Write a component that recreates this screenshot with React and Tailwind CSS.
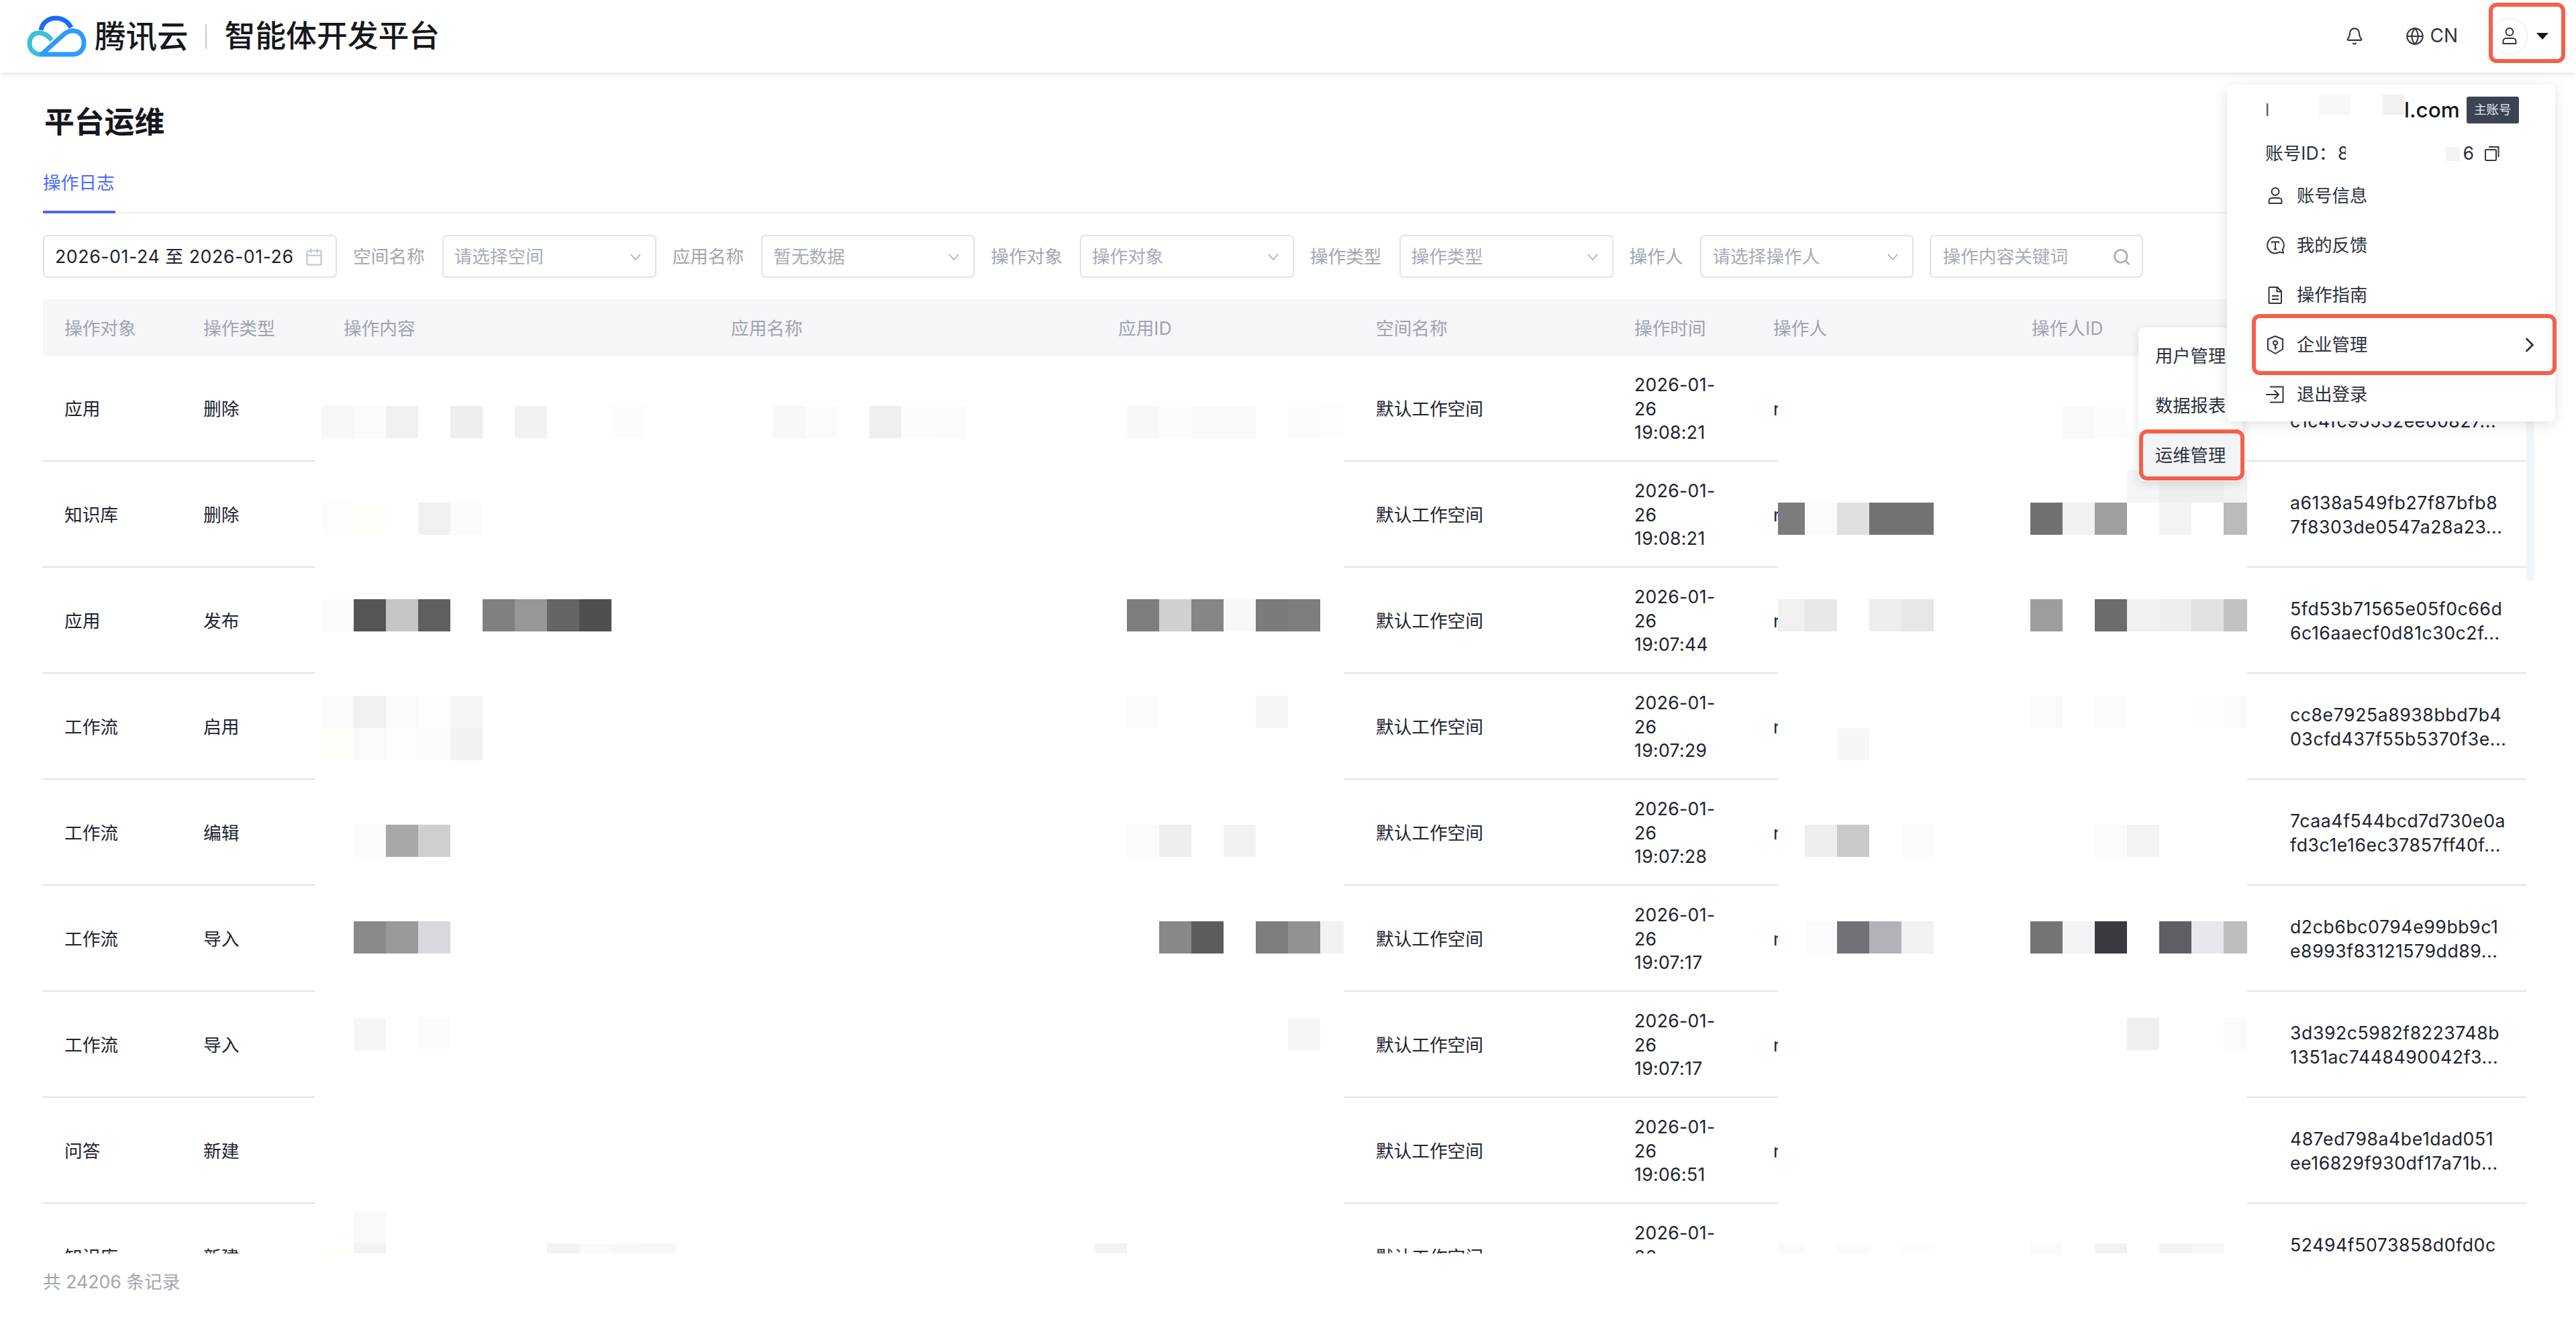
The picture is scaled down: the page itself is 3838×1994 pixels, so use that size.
import { Bell, Globe, Search, Calendar, ChevronRight } from "lucide-react";

const rows = [
  ["应用", "删除", "19:08:21", "e8a1d04b7c3f96ea2b15", "c1c4fc95532ee60827..."],
  ["知识库", "删除", "19:08:21", "a6138a549fb27f87bfb8", "7f8303de0547a28a23..."],
  ["应用", "发布", "19:07:44", "5fd53b71565e05f0c66d", "6c16aaecf0d81c30c2f..."],
  ["工作流", "启用", "19:07:29", "cc8e7925a8938bbd7b4", "03cfd437f55b5370f3e..."],
  ["工作流", "编辑", "19:07:28", "7caa4f544bcd7d730e0a", "fd3c1e16ec37857ff40f..."],
  ["工作流", "导入", "19:07:17", "d2cb6bc0794e99bb9c1", "e8993f83121579dd89..."],
  ["工作流", "导入", "19:07:17", "3d392c5982f8223748b", "1351ac7448490042f3..."],
  ["问答", "新建", "19:06:51", "487ed798a4be1dad051", "ee16829f930df17a71b..."],
  ["知识库", "新建", "19:06:40", "52494f5073858d0fd0c", "\u00a0"],
];

const cols = "grid grid-cols-[207px_209px_577px_577px_384px_385px_207px_385px_385px_384px]";

// mosaic cells over the blurred columns: [col, row, colour]
const mosaicA = [
  [0,0,"#f7f7f7"],[1,0,"#fafafa"],[2,0,"#f0f0f0"],[4,0,"#eeeeee"],[6,0,"#f2f2f2"],[9,0,"#fcfcfc"],
  [14,0,"#f7f7f7"],[15,0,"#fbfbfb"],[17,0,"#efefef"],[18,0,"#fcfcfc"],[19,0,"#fbfbfb"],
  [25,0,"#f8f8f8"],[26,0,"#fcfcfc"],[27,0,"#f9f9f9"],[28,0,"#f9f9f9"],[30,0,"#fbfbfb"],[31,0,"#fdfdfd"],
  [0,3,"#fdfdfd"],[1,3,"#fefefa"],[3,3,"#f0f0f2"],[4,3,"#fbfbfb"],
  [0,6,"#fcfcfc"],[1,6,"#555555"],[2,6,"#c6c6c8"],[3,6,"#5f5f61"],[5,6,"#808080"],[6,6,"#979797"],[7,6,"#656565"],[8,6,"#4f4f4f"],
  [25,6,"#7d7d7d"],[26,6,"#d0d0d0"],[27,6,"#858585"],[28,6,"#f8f8f8"],[29,6,"#7b7b7b"],[30,6,"#7d7d7d"],
  [0,9,"#fcfcfc"],[1,9,"#f0f0f0"],[2,9,"#fafafa"],[3,9,"#fdfdfd"],[4,9,"#f6f6f6"],[25,9,"#fbfbfb"],[29,9,"#f5f5f5"],
  [0,10,"#fefff8"],[1,10,"#fafafa"],[2,10,"#fdfdfd"],[3,10,"#fcfcfc"],[4,10,"#f2f2f2"],
  [1,13,"#fbfbfb"],[2,13,"#a8a8a8"],[3,13,"#cfcfcf"],[25,13,"#fbfbfb"],[26,13,"#eeeeee"],[28,13,"#f2f2f2"],
  [1,16,"#8a8a8a"],[2,16,"#999999"],[3,16,"#d8d8de"],[26,16,"#888888"],[27,16,"#5c5c5c"],[29,16,"#7d7d7d"],[30,16,"#929292"],[31,16,"#f2f2f2"],
  [1,19,"#f6f6f6"],[3,19,"#fcfcfc"],[30,19,"#f6f6f8"],
  [1,25,"#f9f9f9"],[0,26,"#fffffb"],[1,26,"#f3f3f3"],[7,26,"#f2f2f2"],[8,26,"#fafafa"],[9,26,"#f8f8f8"],[10,26,"#f7f7f7"],[24,26,"#f3f3f3"],
];

const mosaicB = [
  [8,0,"#f9f9f9"],[9,0,"#fcfcfc"],
  [10,2,"#f5f5f7"],[11,2,"#efeff0"],[12,2,"#efeff0"],[13,2,"#f3f3f3"],
  [-1,3,"#7c7c7c"],[0,3,"#fbfbfc"],[1,3,"#e0e0e2"],[2,3,"#727272"],[3,3,"#727272"],
  [7,3,"#717171"],[8,3,"#f1f1f3"],[9,3,"#9f9f9f"],[11,3,"#f3f3f5"],[13,3,"#bbbbbb"],
  [-1,6,"#f0f0f0"],[0,6,"#e8e8e8"],[2,6,"#eeeeee"],[3,6,"#e6e6e6"],
  [7,6,"#9d9d9d"],[9,6,"#6c6c6c"],[10,6,"#f1f1f3"],[11,6,"#eeeeee"],[12,6,"#e2e2e2"],[13,6,"#c2c2c2"],
  [7,9,"#fafafa"],[9,9,"#fbfbfb"],[12,9,"#fdfdfd"],[13,9,"#fafafa"],[1,10,"#f6f6f6"],
  [0,13,"#eeeef0"],[1,13,"#c9c9c9"],[3,13,"#fbfbfd"],[9,13,"#fbfbfb"],[10,13,"#f3f3f3"],
  [0,16,"#fbfbfd"],[1,16,"#727176"],[2,16,"#b3b2b6"],[3,16,"#f1f1f3"],
  [7,16,"#747474"],[8,16,"#f3f3f5"],[9,16,"#3b3a3e"],[11,16,"#5f5e62"],[12,16,"#e7e7ec"],[13,16,"#bdbdbf"],
  [10,19,"#efeff1"],[13,19,"#fafafa"],
  [-1,26,"#fbfbfb"],[1,26,"#fbfbfb"],[3,26,"#fdfdfd"],[7,26,"#fbfbfb"],[9,26,"#f2f2f2"],[11,26,"#f3f3f3"],[12,26,"#f7f7f7"],
];

const Mosaic = ({ cells, originX }) => cells.map(([c, r, color]) => (
  <div
    key={c + "-" + r}
    className="absolute w-[48px] h-[48px]"
    style={{ left: originX + c * 48, top: 75 + r * 48, background: color }}
  />
));

const Logo = () => (
  <svg width="110" height="85" viewBox="0 0 110 85" fill="none" strokeWidth="7" strokeLinecap="butt">
    <path d="M31 33C33 21 43 15 53 15C63 15 71 20 76 29" stroke="#1a6cf6" />
    <path d="M47 48C42 41 35 37 28 37C18 37 14 45 14 53C14 62 21 69 31 69" stroke="#3cc0d8" />
    <path d="M32 69L62 42C68 36 74 33 81 34C90 35 95 43 95 52C95 62 88 69 79 69Z" stroke="#2e9bff" strokeLinejoin="round" />
  </svg>
);

const UserIcon = () => (
  <svg width="30" height="30" viewBox="0 0 30 30" fill="none" stroke="#2f3542" strokeWidth="2">
    <circle cx="15" cy="8.5" r="5.5" />
    <path d="M5.5 26v-3.5a4.5 4.5 0 0 1 4.5-4.5h10a4.5 4.5 0 0 1 4.5 4.5v3.5z" strokeLinejoin="round" />
  </svg>
);

const FeedbackIcon = () => (
  <svg width="30" height="30" viewBox="0 0 30 30" fill="none" stroke="#2f3542" strokeWidth="2">
    <path d="M15 2.5a12 12 0 1 0 6.5 22.1l5.5 1.4-1.2-5A12 12 0 0 0 15 2.5z" strokeLinejoin="round" />
    <path d="M10 11.5v-2h10v2M15 9.5v11M12.5 20.5h5" />
  </svg>
);

const DocIcon = () => (
  <svg width="30" height="30" viewBox="0 0 30 30" fill="none" stroke="#2f3542" strokeWidth="2" strokeLinejoin="round">
    <path d="M6.5 3h11.5l6 6v17a1 1 0 0 1-1 1h-16.500a1 1 0 0 1-1-1v-22a1 1 0 0 1 1-1z" />
    <path d="M17.500 3v6.500h6.500M10 16h10M10 21h10" />
  </svg>
);

const ShieldIcon = () => (
  <svg width="30" height="30" viewBox="0 0 30 30" fill="none" stroke="#2f3542" strokeWidth="2" strokeLinejoin="round">
    <path d="M15 2l11 4.500v15l-11 6.500-11-6.500v-15z" />
    <circle cx="15" cy="12" r="3" />
    <path d="M15 15v7M15 19h2.500" />
  </svg>
);

const ExitIcon = () => (
  <svg width="30" height="30" viewBox="0 0 30 30" fill="none" stroke="#2f3542" strokeWidth="2">
    <path d="M7 3.500h19.500v23H7M1 15h19M13.500 8.500l6.500 6.500-6.500 6.500" />
  </svg>
);

const CopyIcon = () => (
  <svg width="22" height="22" viewBox="0 0 22 22" fill="none" stroke="#2f3542" strokeWidth="2">
    <rect x="1" y="5" width="16" height="16" rx="1.500" />
    <path d="M6 1h14.500v15" />
  </svg>
);

const Chevron = () => (
  <svg width="16" height="10" viewBox="0 0 16 10" fill="none" stroke="#a4a9b6" strokeWidth="1.500">
    <path d="M1 1l7 8 7-8" />
  </svg>
);

const Select = ({ text, className }) => (
  <div className={"h-[64px] border-2 border-[#e1e2e9] rounded-[7px] pl-[16px] pr-[21px] pt-[2px] flex items-center justify-between text-[#a7abb8] " + className}>
    <span>{text}</span>
    <Chevron />
  </div>
);

const Filter = ({ label, text, className }) => (
  <div className="flex items-center">
    <span className="text-[#a2a6b3] pt-[2px] mr-[26px] whitespace-nowrap">{label}</span>
    <Select text={text} className={className} />
  </div>
);

const MenuItem = ({ icon, text, children }) => (
  <div className="h-[74px] flex items-center pl-[57px] pr-[20px] text-[26.300px] text-[#2b303c]">
    <span className="w-[30px] h-[30px] mr-[17px]">{icon}</span>
    <span className="flex-1">{text}</span>
    {children}
  </div>
);

export default function App() {
  return (
    <div className="relative w-[3838px] h-[1994px] overflow-hidden bg-white text-[26.67px] leading-[35.6px] text-[#1e2330] font-['Inter','Noto_Sans_CJK_SC',sans-serif]">

      <header className="h-[108px] pl-[30px] pr-[16px] flex items-center bg-white shadow-[0_2px_8px_rgba(0,0,0,0.12)] relative">
        <Logo />
        <span className="ml-px text-[46.500px] leading-[60px] font-medium text-[#16181d]">腾讯云</span>
        <span className="w-[2px] h-[37px] bg-[#c9cbd0] ml-[25px] mr-[27px]" />
        <span className="text-[45.800px] leading-[60px] font-medium text-[#16181d]">智能体开发平台</span>
        <div className="ml-auto flex items-center">
          <Bell size={28} strokeWidth={1.8} color="#2f3542" />
          <Globe size={28} strokeWidth={1.8} color="#2f3542" className="ml-[62px]" />
          <span className="ml-[8px] text-[28px] text-[#2f3542]">CN</span>
          <div className="ml-[50px] w-[54px] h-[54px] rounded-full border border-[#e5e6eb] flex items-center justify-center">
            <UserIcon />
          </div>
          <div className="ml-[13px] mr-[25px] w-0 h-0 border-x-[9px] border-x-transparent border-t-[10px] border-t-[#16181d]" />
        </div>
      </header>

      <main className="pl-[64px] pr-[74px]">
        <h1 className="pt-[44px] pl-[2px] text-[44.800px] leading-[60px] font-semibold text-[#16181d]">平台运维</h1>

        <div className="mt-[38px] h-[68px] border-b-2 border-[#eeeff2]">
          <div className="w-[108px] h-[68px] border-b-4 border-[#4a67f5] text-[#4d6bfa] leading-[44px] whitespace-nowrap">操作日志</div>
        </div>

        <div className="mt-[32px] flex items-center gap-x-[24px]">
          <div className="w-[438px] h-[64px] border-2 border-[#e1e2e9] rounded-[7px] pl-[16px] pr-[18px] pt-[2px] flex items-center justify-between whitespace-nowrap">
            <span className="tracking-[0.6px]">2026-01-24 至 2026-01-26</span>
            <Calendar size={28} strokeWidth={2} color="#c3c8d6" />
          </div>
          <Filter label="空间名称" text="请选择空间" className="w-[319px]" />
          <Filter label="应用名称" text="暂无数据" className="w-[318px]" />
          <Filter label="操作对象" text="操作对象" className="w-[319px]" />
          <Filter label="操作类型" text="操作类型" className="w-[319px]" />
          <Filter label="操作人" text="请选择操作人" className="w-[318px]" />
          <div className="w-[318px] h-[64px] border-2 border-[#e1e2e9] rounded-[7px] pl-[17px] pr-[16px] pt-[2px] flex items-center justify-between text-[#a7abb8]">
            <span>操作内容关键词</span>
            <Search size={28} strokeWidth={2.2} color="#a4a9b6" />
          </div>
        </div>

        <div className={cols + " mt-[32px] h-[84px] pt-[3px] items-center bg-[#f5f6f8] text-[#9ea3b1]"}>
          {["操作对象", "操作类型", "操作内容", "应用名称", "应用ID", "空间名称", "操作时间", "操作人", "操作人ID", ""].map((h, i) => (
            <div key={i} className="px-[32px] whitespace-nowrap">{h}</div>
          ))}
        </div>

        <div className="relative w-[3700px] h-[1338px] overflow-hidden">
          {rows.map((row, i) => (
            <div key={i} className={cols + " h-[158px] pt-[3px] items-center border-b-2 border-[#e1e2e9]"}>
              <div className="px-[32px]">{row[0]}</div>
              <div className="px-[32px]">{row[1]}</div>
              <div />
              <div />
              <div />
              <div className="px-[32px]">默认工作空间</div>
              <div className="px-[32px] tracking-[0.3px] whitespace-nowrap">
                <div>2026-01-</div>
                <div>26</div>
                <div>{row[2]}</div>
              </div>
              <div className="px-[32px]">r</div>
              <div />
              <div className="px-[32px] tracking-[0.55px] whitespace-nowrap">
                <div>{row[3]}</div>
                <div>{row[4]}</div>
              </div>
            </div>
          ))}

          {/* white masks with mosaic over the hidden columns */}
          <div className="absolute left-[405px] top-0 bottom-0 w-[1533px] bg-white overflow-hidden">
            <Mosaic cells={mosaicA} originX={10} />
          </div>
          <div className="absolute left-[2585px] top-0 bottom-0 w-[699px] bg-white overflow-hidden">
            <Mosaic cells={mosaicB} originX={40} />
          </div>
        </div>

        <div className="mt-[25px] text-[#a2a6b3]">共 24206 条记录</div>
      </main>

      {/* scrollbar */}
      <div className="absolute left-[3764px] top-[530px] w-[11px] h-[336px] rounded-full bg-[#f1f4f9]" />

      {/* submenu */}
      <div className="absolute left-[3186px] top-[488px] w-[155px] h-[229px] pt-[6px] bg-white rounded-[8px] shadow-[0_4px_16px_rgba(0,0,0,0.12)] text-[26.300px] text-[#2b303c]">
        <div className="h-[74px] flex items-center pl-[25px]">用户管理</div>
        <div className="h-[74px] flex items-center pl-[25px]">数据报表</div>
        <div className="h-[74px] mx-[6px] pl-[19px] flex items-center bg-[#f3f4f7] rounded-[6px]">运维管理</div>
      </div>

      {/* account menu */}
      <div className="absolute left-[3318px] top-[126px] w-[489px] h-[502px] pt-[12px] bg-white rounded-[8px] shadow-[0_4px_20px_rgba(0,0,0,0.12)]">
        <div className="h-[52px] pl-[57px] flex items-center text-[31.500px] font-medium text-[#16181d]">
          <span className="w-[207px] text-[26px] font-normal text-[#555a66]">l</span>
          <span>l.com</span>
          <span className="ml-[10px] w-[78px] h-[40px] rounded-[3px] bg-[#3c4353] text-[18.500px] font-normal text-[#e8eaef] flex items-center justify-center">主账号</span>
        </div>
        <div className="absolute left-[137px] top-[15px] w-[47px] h-[30px] bg-[#f8f8f8]" />
        <div className="absolute left-[232px] top-[15px] w-[32px] h-[30px] bg-[#f0f0f0]" />
        <div className="mt-[13px] h-[52px] pl-[57px] flex items-center text-[#2b303c]">
          <span className="w-[108px] whitespace-nowrap">账号ID：</span>
          <span className="w-[12px] overflow-hidden">8</span>
          <span className="relative ml-[149px] w-[21px] h-[21px] bg-[#f4f4f4]" />
          <span className="ml-[-2px] w-[23px] text-right overflow-hidden">6</span>
          <span className="ml-[16px]"><CopyIcon /></span>
        </div>
        <MenuItem icon={<UserIcon />} text="账号信息" />
        <MenuItem icon={<FeedbackIcon />} text="我的反馈" />
        <MenuItem icon={<DocIcon />} text="操作指南" />
        <MenuItem icon={<ShieldIcon />} text="企业管理">
          <ChevronRight size={36} strokeWidth={1.8} color="#2b303c" />
        </MenuItem>
        <MenuItem icon={<ExitIcon />} text="退出登录" />
      </div>

      {/* red annotation boxes */}
      <div className="absolute left-[3708px] top-[4px] w-[114px] h-[90px] border-[6px] border-[#f4604a] rounded-[12px]" />
      <div className="absolute left-[3355px] top-[468px] w-[454px] h-[91px] border-[6px] border-[#f4604a] rounded-[12px]" />
      <div className="absolute left-[3187px] top-[640px] w-[157px] h-[76px] border-[6px] border-[#f4604a] rounded-[12px]" />
    </div>
  );
}
